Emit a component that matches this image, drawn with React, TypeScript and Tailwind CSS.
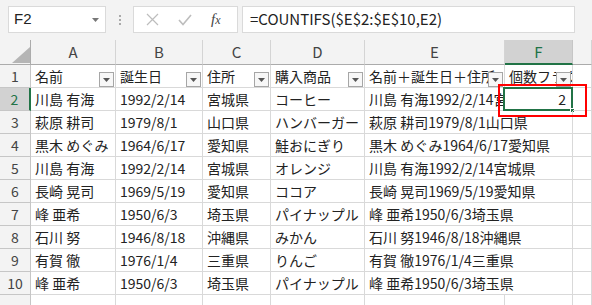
import { useState } from 'react';

// Excel風のシート表示（フィルター付き、F2選択中）

type Row = {
  name: string;
  birth: string;
  addr: string;
  item: string;
  key: string;
  flag?: string;
};

const rows: Row[] = [
  { name: '川島 有海', birth: '1992/2/14', addr: '宮城県', item: 'コーヒー', key: '川島 有海1992/2/14宮城県', flag: '2' },
  { name: '萩原 耕司', birth: '1979/8/1', addr: '山口県', item: 'ハンバーガー', key: '萩原 耕司1979/8/1山口県' },
  { name: '黒木 めぐみ', birth: '1964/6/17', addr: '愛知県', item: '鮭おにぎり', key: '黒木 めぐみ1964/6/17愛知県' },
  { name: '川島 有海', birth: '1992/2/14', addr: '宮城県', item: 'オレンジ', key: '川島 有海1992/2/14宮城県' },
  { name: '長崎 晃司', birth: '1969/5/19', addr: '愛知県', item: 'ココア', key: '長崎 晃司1969/5/19愛知県' },
  { name: '峰 亜希', birth: '1950/6/3', addr: '埼玉県', item: 'パイナップル', key: '峰 亜希1950/6/3埼玉県' },
  { name: '石川 努', birth: '1946/8/18', addr: '沖縄県', item: 'みかん', key: '石川 努1946/8/18沖縄県' },
  { name: '有賀 徹', birth: '1976/1/4', addr: '三重県', item: 'りんご', key: '有賀 徹1976/1/4三重県' },
  { name: '峰 亜希', birth: '1950/6/3', addr: '埼玉県', item: 'パイナップル', key: '峰 亜希1950/6/3埼玉県' },
];

const headers = ['名前', '誕生日', '住所', '購入商品', '名前＋誕生日＋住所', '個数フラグ'];
const cols = ['A', 'B', 'C', 'D', 'E', 'F', ''];

const font = { fontFamily: '"Noto Sans CJK JP", "Noto Sans", sans-serif' };

function FilterBtn() {
  return (
    <div className="absolute right-[1px] top-[7px] flex h-[15px] w-[15px] items-center justify-center border border-[#a6a6a6] bg-[#f7f7f7]">
      <svg width="7" height="4" viewBox="0 0 7 4">
        <path d="M0 0h7L3.5 4z" fill="#555" />
      </svg>
    </div>
  );
}

function Cell({ children, className = '' }: { children?: React.ReactNode; className?: string }) {
  return (
    <div className={`relative h-[23px] overflow-hidden whitespace-nowrap border-b border-r border-[#d9d9d9] pl-[4px] text-[14px] leading-[22px] text-[#222] ${className}`}>
      {children}
    </div>
  );
}

function RowHead({ n, active }: { n?: number; active?: boolean }) {
  return (
    <div
      className={`h-[23px] border-b text-center text-[14px] leading-[22px] ${
        active
          ? 'border-r-2 border-b-[#c6c6c6] border-r-[#217346] bg-[#d2d2d2] text-[#217346]'
          : 'border-r border-[#c6c6c6] bg-[#f3f3f3] text-[#444]'
      }`}
    >
      {n}
    </div>
  );
}

export default function App() {
  const [sel] = useState('F2');

  return (
    <div className="relative h-[305px] w-[592px] overflow-hidden bg-white" style={font}>
      {/* 数式バー */}
      <div className="flex h-[40px] items-start bg-[#f3f3f3] pl-[8px] pt-[6px]">
        <div className="flex h-[27px] w-[98px] items-center justify-between border border-[#dadada] bg-white pl-[5px] pr-[6px]">
          <span className="text-[15px] text-[#222]" style={{ fontFamily: '"Liberation Sans", Arial, sans-serif' }}>{sel}</span>
          <svg width="7" height="4" viewBox="0 0 7 4">
            <path d="M0 0h7L3.5 4z" fill="#777" />
          </svg>
        </div>
        <div className="flex h-[27px] w-[27px] flex-col items-center justify-center gap-[2px]">
          <span className="h-[2px] w-[2px] bg-[#aaa]" />
          <span className="h-[2px] w-[2px] bg-[#aaa]" />
          <span className="h-[2px] w-[2px] bg-[#aaa]" />
        </div>
        <div className="flex h-[27px] w-[105px] items-center border border-[#dadada] bg-white">
          <svg className="ml-[12px]" width="13" height="13" viewBox="0 0 13 13">
            <path d="M1 1l11 11M12 1L1 12" stroke="#bdbdbd" strokeWidth="1.2" />
          </svg>
          <svg className="ml-[19px]" width="14" height="12" viewBox="0 0 14 12">
            <path d="M1 6l4 4.5L13 1" stroke="#bdbdbd" strokeWidth="1.6" fill="none" />
          </svg>
          <span className="ml-[19px] text-[15px] italic text-[#444]" style={{ fontFamily: '"Liberation Serif", serif' }}>
            f<span className="text-[12px]">x</span>
          </span>
        </div>
        <div className="ml-[4px] flex h-[27px] w-[333px] items-center border border-[#dadada] bg-white pl-[7px] text-[15px] text-[#222]">
          =COUNTIFS($E$2:$E$10,E2)
        </div>
      </div>

      {/* シート */}
      <div className="grid grid-cols-[31px_85px_87px_68px_94px_140px_68px_1fr]">
        {/* 列見出し */}
        <div className="relative h-[25px] border-b border-r border-[#ababab] bg-[#f3f3f3]">
          <svg className="absolute left-[12px] top-[7px]" width="18" height="16" viewBox="0 0 18 16">
            <path d="M18 0V16H0z" fill="#b5b5b5" />
          </svg>
        </div>
        {cols.map((c) =>
          c === 'F' ? (
            <div key={c} className="h-[25px] border-b-2 border-r border-b-[#217346] border-r-[#c6c6c6] bg-[#d2d2d2] pt-[1px] text-center text-[15px] text-[#217346]">
              {c}
            </div>
          ) : (
            <div key={c || 'g'} className="h-[25px] border-b border-r border-b-[#ababab] border-r-[#d4d4d4] bg-[#f3f3f3] pt-[1px] text-center text-[15px] text-[#444]">
              {c}
            </div>
          ),
        )}

        {/* 1行目：見出し＋フィルター */}
        <RowHead n={1} />
        {headers.map((h) => (
          <Cell key={h}>
            {h}
            <FilterBtn />
          </Cell>
        ))}
        <Cell />

        {/* データ行 */}
        {rows.map((r, i) => {
          const n = i + 2;
          return (
            <div key={n} className="contents">
              <RowHead n={n} active={n === 2} />
              <Cell>{r.name}</Cell>
              <Cell>{r.birth}</Cell>
              <Cell>{r.addr}</Cell>
              <Cell>{r.item}</Cell>
              {r.flag ? (
                <>
                  <Cell>{r.key}</Cell>
                  <Cell className="overflow-visible pr-[6px] text-right">
                    {r.flag}
                    <div className="absolute -left-[2px] -top-[1px] h-[24px] w-[70px] border-2 border-[#217346]" />
                    <div className="absolute -bottom-[3px] -right-[3px] h-[5px] w-[5px] border border-white bg-[#217346]" />
                  </Cell>
                </>
              ) : (
                <Cell className="col-span-2">{r.key}</Cell>
              )}
              <Cell />
            </div>
          );
        })}

        {/* 11行目（見切れ） */}
        <RowHead />
        {cols.map((c) => (
          <Cell key={'r11' + c} />
        ))}
      </div>

      {/* 赤枠 */}
      <div className="pointer-events-none absolute left-[498px] top-[84px] h-[33px] w-[89px] border-2 border-[#f00]" />
    </div>
  );
}
